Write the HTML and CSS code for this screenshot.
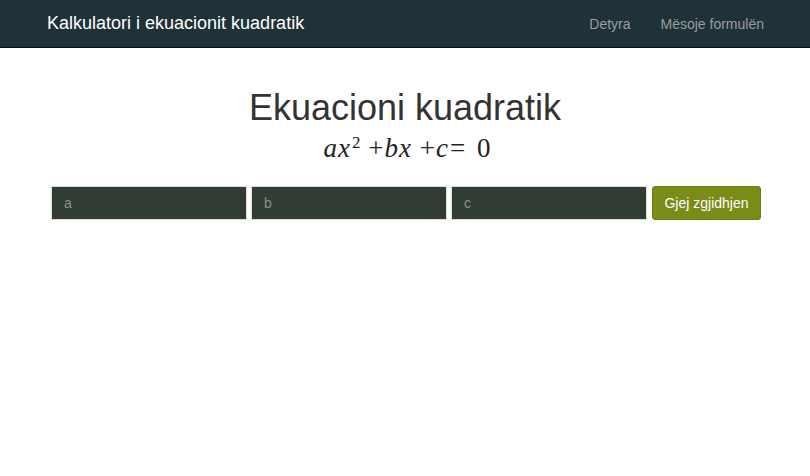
FILE: index.html
```html
<!DOCTYPE html>
<html lang="sq">
<head>
<meta charset="utf-8">
<title>Kalkulatori i ekuacionit kuadratik</title>
<link rel="stylesheet" href="styles.css">
</head>
<body>
<nav class="navbar">
  <div class="brand">Kalkulatori i ekuacionit kuadratik</div>
  <ul class="nav-links">
    <li>Detyra</li>
    <li>Mësoje formulën</li>
  </ul>
</nav>
<main class="main">
  <h1 class="title">Ekuacioni kuadratik</h1>
  <div class="formula"><i>ax</i><sup>2</sup> <span class="op">+</span><i>bx</i> <span class="op">+</span><i>c</i><span class="op">=</span> <span class="num">0</span></div>
  <form class="solver">
    <input class="field" type="text" placeholder="a">
    <input class="field" type="text" placeholder="b">
    <input class="field" type="text" placeholder="c">
    <button class="btn" type="button">Gjej zgjidhjen</button>
  </form>
</main>
</body>
</html>
```
FILE: styles.css
```css
html, body {
  margin: 0;
  padding: 0;
  background: #ffffff;
  font-family: "Liberation Sans", Arial, sans-serif;
  color: #333333;
}
.navbar {
  height: 47px;
  background: #1f3238;
  border-bottom: 1px solid #0a0f10;
  display: flex;
  align-items: center;
  justify-content: space-between;
  padding: 0 46px 0 47px;
}
.brand {
  color: #ffffff;
  font-size: 18px;
}
.nav-links {
  list-style: none;
  margin: 0;
  padding: 0;
  display: flex;
  gap: 30px;
  color: #9d9d9d;
  font-size: 14px;
}
.main {
  display: flex;
  flex-direction: column;
  align-items: center;
}
.title {
  margin: 40px 0 0;
  font-weight: normal;
  font-size: 36px;
  line-height: 40px;
  color: #333333;
}
.formula {
  font-family: "Liberation Serif", "Times New Roman", serif;
  font-size: 27px;
  line-height: 30px;
  margin-top: 5px;
  color: #222;
  padding-left: 4px;
}
.formula i {
  letter-spacing: 1px;
}
.formula sup {
  font-size: 17px;
  vertical-align: 9px;
  line-height: 0;
  margin-left: 1px;
}
.formula .op {
  margin: 0 1px;
}
.formula .num {
  margin-left: 4px;
}
.solver {
  display: flex;
  gap: 4px;
  margin-top: 23px;
  padding-left: 2px;
}
.field {
  width: 196px;
  height: 34px;
  box-sizing: border-box;
  border: 1px solid #dcdcdc;
  background: #313d32;
  color: #ddd;
  padding: 0 12px;
  font-family: "Liberation Sans", Arial, sans-serif;
  font-size: 14px;
  outline: none;
}
.field::placeholder {
  color: #8c938c;
}
.btn {
  width: 109px;
  height: 34px;
  margin-left: 1px;
  box-sizing: border-box;
  background: #7a8b18;
  border: 1px solid #6e7e14;
  border-radius: 3px;
  color: #ffffff;
  font-family: "Liberation Sans", Arial, sans-serif;
  font-size: 14px;
  padding: 0;
}
```
